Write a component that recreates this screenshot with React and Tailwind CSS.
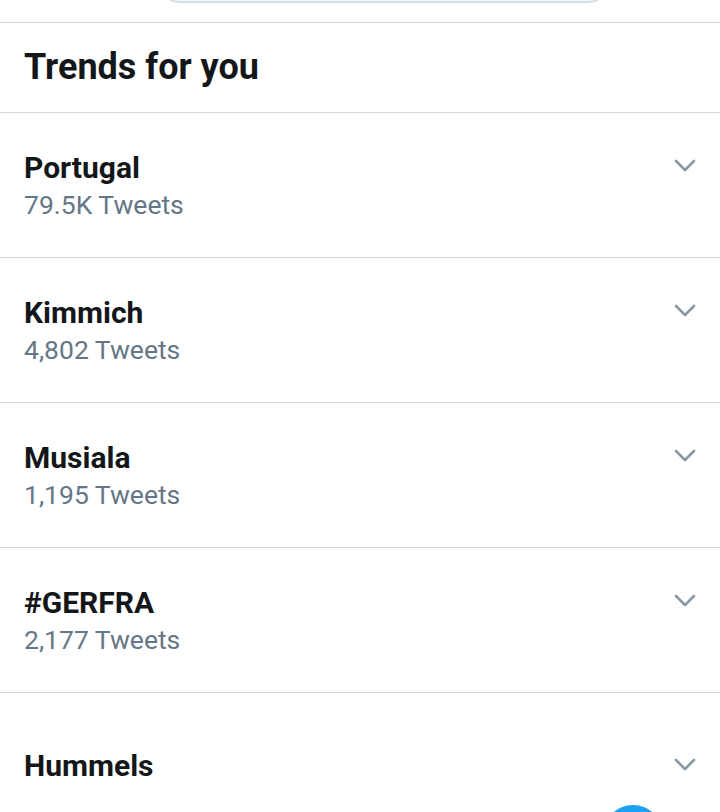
const TRENDS = [
  { name: 'Portugal', count: '79.5K Tweets' },
  { name: 'Kimmich', count: '4,802 Tweets' },
  { name: 'Musiala', count: '1,195 Tweets' },
  { name: '#GERFRA', count: '2,177 Tweets' },
];

function Chevron() {
  return (
    <svg width="22" height="14" viewBox="0 0 22 14" fill="none" className="shrink-0">
      <path d="M2 2l9 9 9-9" stroke="#8899a6" strokeWidth="2.6" strokeLinecap="round" strokeLinejoin="round" />
    </svg>
  );
}

export default function App() {
  return (
    <div
      className="relative h-[812px] w-[720px] overflow-hidden bg-white"
      style={{ fontFamily: 'Roboto, "Noto Sans", sans-serif' }}
    >
      {/* search bar edge */}
      <div className="flex h-[23px] flex-col justify-end overflow-hidden border-b border-[#d4d7da]">
        <div className="mb-[19px] ml-[158px] h-[43px] w-[452px] shrink-0 rounded-full border-2 border-[#d5dee6] bg-[#f8fafb]" />
      </div>

      {/* header */}
      <div className="h-[90px] border-b border-[#d4d7da] pl-6 pt-[24px]">
        <h2 className="text-[36px] font-bold leading-[40px] text-[#14171a]">Trends for you</h2>
      </div>

      {/* trends */}
      {TRENDS.map((t) => (
        <div key={t.name} className="flex h-[145px] justify-between border-b border-[#d4d7da] pl-6 pr-6 pt-[37px]">
          <div>
            <p className="text-[30px] font-bold leading-[36px] text-[#14171a]">{t.name}</p>
            <p className="text-[26.5px] leading-[37px] text-[#657786]">{t.count}</p>
          </div>
          <div className="pt-[9px]">
            <Chevron />
          </div>
        </div>
      ))}

      <div className="flex justify-between pl-6 pr-6 pt-[55px]">
        <p className="text-[30px] font-bold leading-[36px] text-[#14171a]">Hummels</p>
        <div className="pt-[10px]">
          <Chevron />
        </div>
      </div>

      {/* compose button */}
      <div className="absolute left-[603px] top-[805px] h-[60px] w-[60px] rounded-full bg-[#1da1f2]" />
    </div>
  );
}
